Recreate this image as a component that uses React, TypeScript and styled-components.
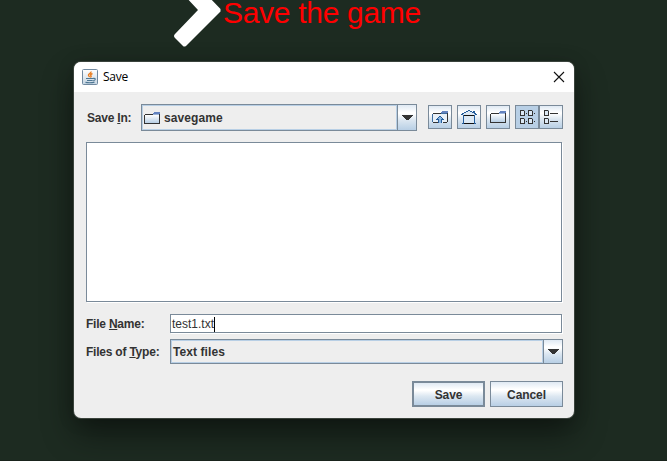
import React from "react";
import styled, { createGlobalStyle } from "styled-components";

const Global = createGlobalStyle`
  html, body { margin: 0; height: 100%; overflow: hidden; background: #1d2b21; }
  * { box-sizing: border-box; }
`;

const steel = "#7a8a99";
const metal = "linear-gradient(#dfe9f3 0%, #ffffff 30%, #ffffff 34%, #dce7f1 60%, #b8cfe5 100%)";

const Screen = styled.div`
  position: relative;
  width: 667px;
  height: 461px;
  overflow: hidden;
  background: #1d2b21;
  border-bottom: 1px solid #19231c;
  font-family: "Liberation Sans", Arial, sans-serif;
  padding: 62px 0 0 74px;
`;

const Prompt = styled.div`
  position: absolute;
  left: 174px;
  top: 0;
  display: flex;
  height: 48px;
`;

const Heading = styled.div`
  font-size: 30px;
  line-height: 26px;
  letter-spacing: -0.3px;
  color: #ff0000;
  white-space: nowrap;
`;

const Dialog = styled.div`
  position: relative;
  width: 500px;
  height: 356px;
  border-radius: 7px;
  background: #eeeeee;
  box-shadow: 0 0 0 1px #3a433c, 0 16px 32px rgba(0, 0, 0, 0.45), 0 2px 18px rgba(0, 0, 0, 0.15);
`;

const TitleBar = styled.div`
  display: flex;
  align-items: center;
  height: 30px;
  padding: 0 9px 0 8px;
  border-radius: 7px 7px 0 0;
  background: #fff;
  color: #000;
`;

const Title = styled.div`
  flex: 1;
  margin: -1px 0 0 5px;
  font: 12px/16px "Open Sans", "Noto Sans", sans-serif;
  letter-spacing: -0.25px;
`;

const Body = styled.div`
  padding: 12px 11px 0 12px;
`;

const Row = styled.div<{ $h: number; $gap?: number }>`
  display: flex;
  align-items: center;
  height: ${(p) => p.$h}px;
  margin-top: ${(p) => p.$gap ?? 0}px;
`;

const Label = styled.div<{ $w: number; $indent?: number }>`
  width: ${(p) => p.$w}px;
  padding: 1px 0 0 ${(p) => p.$indent ?? 0}px;
  font-size: 12px;
  font-weight: bold;
  line-height: 14px;
  letter-spacing: -0.22px;
  color: #333;
  white-space: nowrap;
  u { text-underline-offset: 1px; text-decoration-thickness: 1px; text-decoration-skip-ink: none; }
`;

const Combo = styled.div<{ $w: number }>`
  display: flex;
  width: ${(p) => p.$w}px;
  height: 100%;
  border: 1px solid ${steel};
`;

const ComboValue = styled.div`
  display: flex;
  flex: 1;
  align-items: center;
  gap: 4px;
  padding-left: 1px;
  border: 1px solid #b8cfe5;
  font-size: 12px;
  font-weight: bold;
  letter-spacing: 0.08px;
  color: #333;
`;

const ComboArrow = styled.div`
  display: flex;
  align-items: center;
  justify-content: center;
  width: 19px;
  border-left: 1px solid ${steel};
  background: ${metal};
`;

const Tools = styled.div`
  display: flex;
  margin: -1px 0 0 11px;
`;

const Tool = styled.div<{ $on?: boolean; $gap?: number }>`
  width: 24px;
  height: 24px;
  margin-right: ${(p) => p.$gap ?? 0}px;
  border: 1px solid ${steel};
  background: ${(p) => (p.$on ? "#b8cfe5" : metal)};
  svg { display: block; margin: 3px; }
`;

const FileList = styled.div`
  width: 476px;
  height: 160px;
  margin-top: 11px;
  border: 1px solid ${steel};
  background: #fff;
  box-shadow: 1px 1px 0 #fff;
`;

const Input = styled.div`
  display: flex;
  align-items: center;
  width: 392px;
  height: 19px;
  padding: 1px 0 0 1px;
  border: 1px solid ${steel};
  background: #fff;
  box-shadow: 1px 1px 0 #fff;
  font-size: 12px;
  color: #333;
`;

const Caret = styled.span`
  width: 1px;
  height: 15px;
  background: #000;
`;

const Actions = styled.div`
  display: flex;
  justify-content: flex-end;
  gap: 5px;
  margin-top: 17px;
`;

const Button = styled.div<{ $primary?: boolean }>`
  display: flex;
  align-items: center;
  justify-content: center;
  width: 73px;
  height: 26px;
  padding-top: 1px;
  border: ${(p) => (p.$primary ? 2 : 1)}px solid ${steel};
  background: ${metal};
  font-size: 12px;
  font-weight: bold;
  letter-spacing: -0.1px;
  color: #333;
`;

const Arrow = () => (
  <svg width="11" height="5" shapeRendering="crispEdges">
    <path d="M0 0h11v1H0zM1 1h9v1H1zM2 2h7v1H2zM3 3h5v1H3zM4 4h3v1H4z" fill="#333" />
  </svg>
);

const FolderIcon = () => (
  <svg width="16" height="16" shapeRendering="crispEdges">
    <defs>
      <linearGradient id="folder" x1="0" y1="0" x2="0" y2="1">
        <stop offset="0" stopColor="#fff" />
        <stop offset="1" stopColor="#b8cfe5" />
      </linearGradient>
    </defs>
    <path d="M1 5h14v8H1z" fill="url(#folder)" />
    <path d="M10 2h6v1h-6zM9 3h7v1H9z" fill="#6382bf" />
    <path d="M1 4h8v1H1zM0 5h1v8H0zM15 4h1v9h-1zM0 13h16v1H0z" fill="#333" />
    <path d="M9 4h6v1H9z" fill="#9db5d9" />
  </svg>
);

const UpIcon = () => (
  <svg width="16" height="16" shapeRendering="crispEdges">
    <path d="M1 4h14v10H1z" fill="#e8f0f8" />
    <path d="M10 2h6v1h-6zM9 3h7v1H9z" fill="#6382bf" />
    <path d="M1 4h8v1H1zM15 4h1v9h-1zM1 13h5v1H1zM11 13h4v1h-4z" fill="#333" />
    <path d="M0 5h1v8H0zM9 4h6v1H9z" fill="#3e6d9f" />
    <path d="M7 7h2v1H7zM6 8h1v1H6zM9 8h1v1H9zM5 9h1v1H5zM10 9h1v1h-1zM4 10h3v1H4zM9 10h3v1H9zM6 11h1v3H6zM9 11h1v3H9z" fill="#245d9c" />
    <path d="M7 8h2v6H7zM6 9h4v1H6z" fill="#8bb5e0" />
  </svg>
);

const HomeIcon = () => (
  <svg width="16" height="16" shapeRendering="crispEdges">
    <path d="M7 2h2v1H7zM5 3h6v1H5zM3 4h10v1H3zM2 5h12v1H2zM3 7h10v7H3z" fill="#dce9f5" />
    <path d="M7 1h2v1H7zM5 2h2v1H5zM9 2h2v1H9zM12 2h2v1h-2zM3 3h2v1H3zM11 3h3v1h-3zM1 4h2v1H1zM13 4h2v1h-2zM0 5h2v1H0zM14 5h2v1h-2zM2 6h1v8H2zM13 6h1v8h-1zM1 14h2v1H1zM13 14h2v1h-2z" fill="#245d9c" />
    <path d="M3 6h10v1H3zM3 14h10v1H3z" fill="#111" />
  </svg>
);

const Tile = ({ x, y }: { x: number; y: number }) => (
  <>
    <rect x={x} y={y} width="5" height="6" fill="#333" />
    <rect x={x + 1} y={y + 1} width="3" height="4" fill="#dce9f5" />
    <rect x={x + 4} y={y} width="1" height="1" fill="#91a4b6" />
  </>
);

const GridIcon = () => (
  <svg width="16" height="16" shapeRendering="crispEdges">
    <Tile x={1} y={1} />
    <Tile x={9} y={1} />
    <Tile x={1} y={9} />
    <Tile x={9} y={9} />
    <path d="M7 4h1v1H7zM15 4h1v1h-1zM7 12h1v1H7zM15 12h1v1h-1z" fill="#333" />
  </svg>
);

const DetailsIcon = () => (
  <svg width="16" height="16" shapeRendering="crispEdges">
    <Tile x={1} y={1} />
    <Tile x={1} y={9} />
    <path d="M7 4h8v1H7zM7 12h8v1H7z" fill="#333" />
  </svg>
);

const JavaIcon = () => (
  <svg width="16" height="16" viewBox="0 0 16 16">
    <defs>
      <linearGradient id="java" x1="0" y1="0" x2="0" y2="1">
        <stop offset="0" stopColor="#fff" />
        <stop offset="1" stopColor="#c5d5e2" />
      </linearGradient>
    </defs>
    <rect x=".5" y=".5" width="15" height="15" rx="1" fill="url(#java)" stroke="#7089a0" />
    <path d="M9 2.500c.5 1.800-3 2.300-2.500 3.800.2.800 1 1 .9 1.900M10.500 4.500c-2 .8-2.200 1.500-1.500 2.300.5.700-.2 1.200-.7 1.500" fill="none" stroke="#ea7d20" strokeWidth="1.400" />
    <path d="M4 9.500h7.300M5 11.500h5.700M3.500 13.400c3 .5 6.500.4 9-.3M11.300 9.400c2.800-.5 2.500 2-.1 2.300" fill="none" stroke="#4d7693" strokeWidth="1.100" />
  </svg>
);

export default function App() {
  return (
    <>
      <Global />
      <Screen>
        <Prompt>
          <svg width="49" height="48">
            <path d="M10-5 24 10 1 34Q-1 36 1 38L9 46Q10 47 12 46L46.500 11.500V9L34-4Z" fill="#fff" />
          </svg>
          <Heading>Save the game</Heading>
        </Prompt>
        <Dialog>
          <TitleBar>
            <JavaIcon />
            <Title>Save</Title>
            <svg width="12" height="12">
              <path d="M1 1 11 11M11 1 1 11" stroke="#111" strokeWidth="1.100" />
            </svg>
          </TitleBar>
          <Body>
            <Row $h={27}>
              <Label $w={55} $indent={1}>Save <u>I</u>n:</Label>
              <Combo $w={276}>
                <ComboValue><FolderIcon />savegame</ComboValue>
                <ComboArrow><Arrow /></ComboArrow>
              </Combo>
              <Tools>
                <Tool $gap={5}><UpIcon /></Tool>
                <Tool $gap={5}><HomeIcon /></Tool>
                <Tool $gap={5}><FolderIcon /></Tool>
                <Tool $on><GridIcon /></Tool>
                <Tool><DetailsIcon /></Tool>
              </Tools>
            </Row>
            <FileList />
            <Row $h={19} $gap={12}>
              <Label $w={84}>File <u>N</u>ame:</Label>
              <Input>test1.txt<Caret /></Input>
            </Row>
            <Row $h={25} $gap={6}>
              <Label $w={84}>Files of <u>T</u>ype:</Label>
              <Combo $w={393}>
                <ComboValue>Text files</ComboValue>
                <ComboArrow><Arrow /></ComboArrow>
              </Combo>
            </Row>
            <Actions>
              <Button $primary>Save</Button>
              <Button>Cancel</Button>
            </Actions>
          </Body>
        </Dialog>
      </Screen>
    </>
  );
}
